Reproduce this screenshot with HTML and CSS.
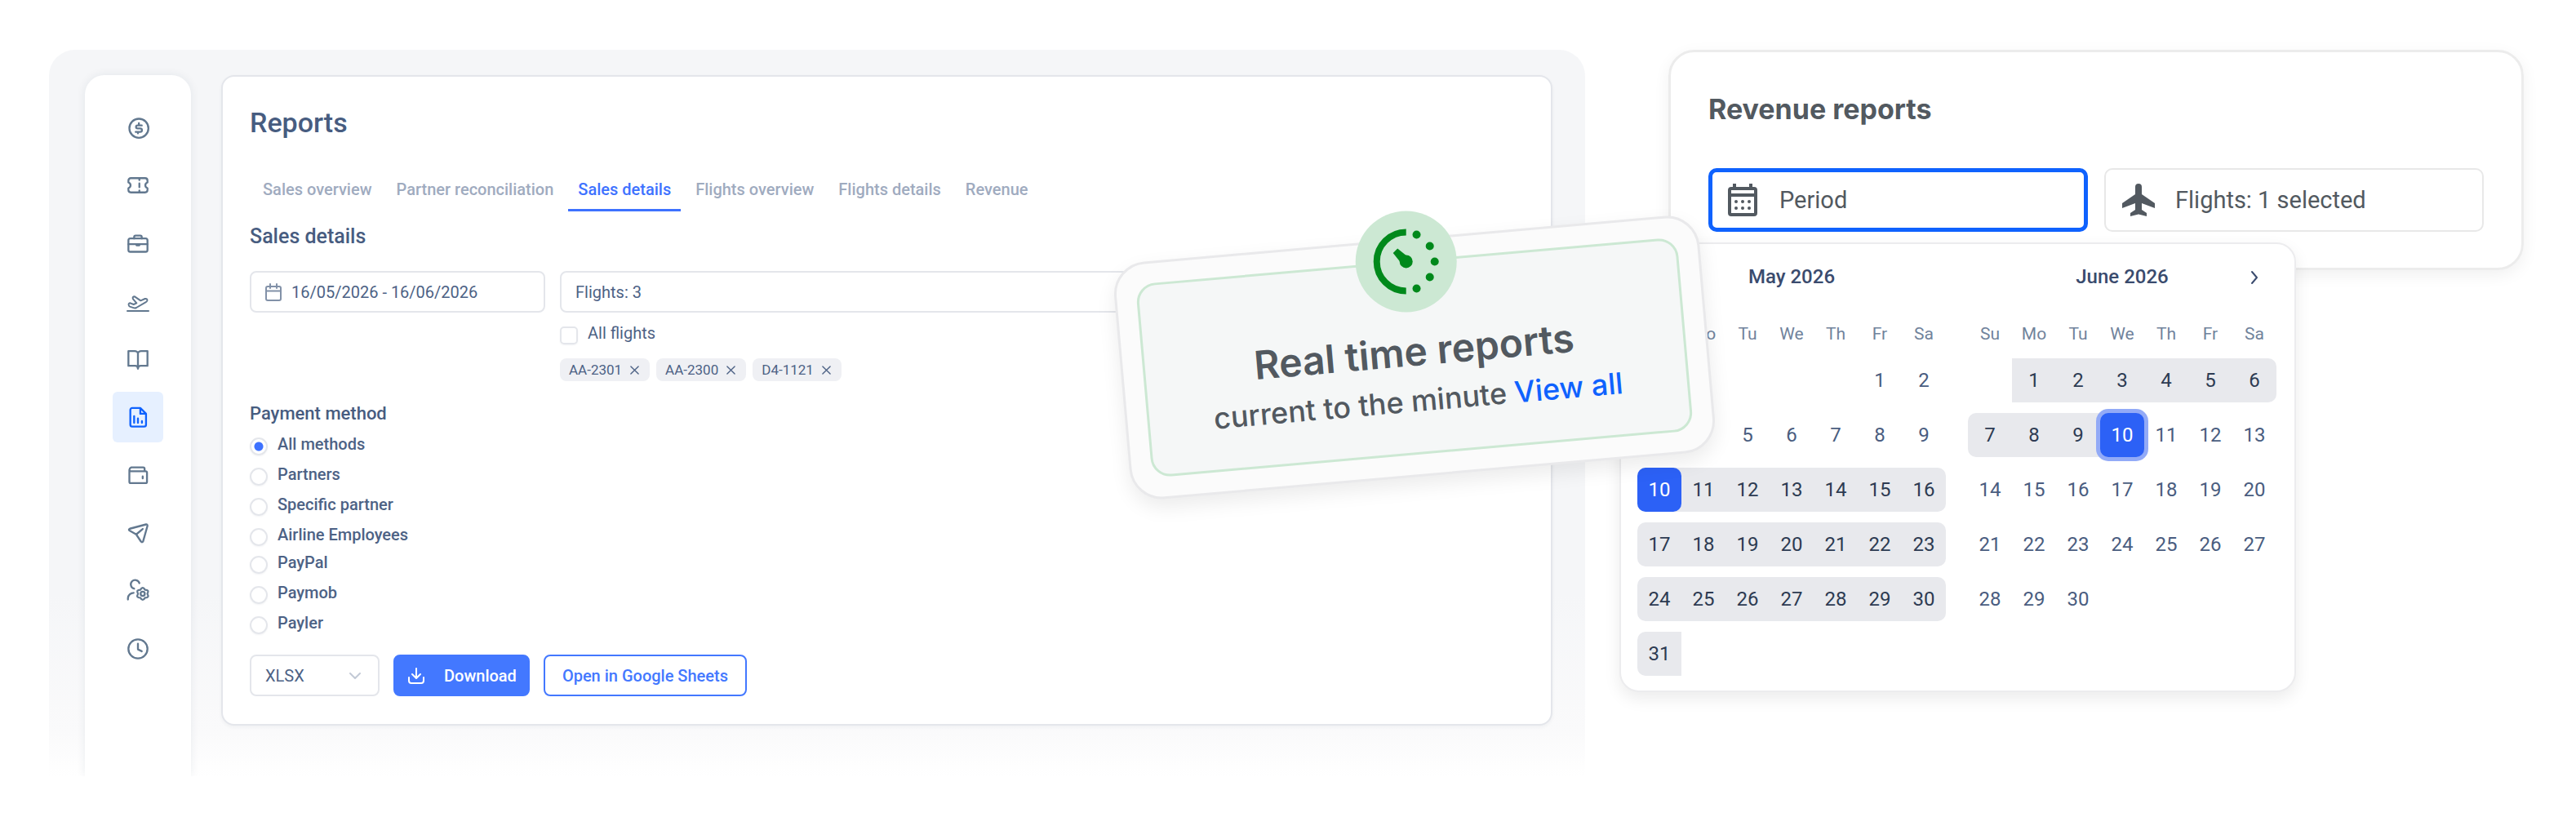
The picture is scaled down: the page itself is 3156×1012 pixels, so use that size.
FILE: index.html
```html
<!DOCTYPE html>
<html lang="en">
<head>
  <meta charset="UTF-8" />
  <meta name="viewport" content="width=device-width, initial-scale=1" />
  <title>Reports</title>
  <link rel="stylesheet" href="styles.css">
</head>
<body>
  <div class="page">
    <section class="stage">
      <nav class="rail" aria-label="Main">
        <a href="#" aria-label="Finance"><svg viewBox="0 0 24 24"><g transform="translate(1 1)"><circle cx="12" cy="12" r="10"/><path d="M15 9h-4.4a1.6 1.6 0 0 0 0 3.2h2.8a1.8 1.8 0 0 1 0 3.6H8.6M12 6.6V9M11 15.8v1.4"/></g></svg></a>
        <a href="#" aria-label="Tickets"><svg viewBox="0 0 24 24"><path d="M2 9V7a2.500 2.500 0 0 1 2.500-2.500h15A2.500 2.500 0 0 1 22 7v2c-3 1.200-3 4.800 0 6v2a2.500 2.500 0 0 1-2.500 2.500h-15A2.500 2.500 0 0 1 2 17v-2c3-1.200 3-4.800 0-6zM13.500 5v1.500M13.500 10v4M13.500 17.500V19"/></svg></a>
        <a href="#" aria-label="Business"><svg viewBox="0 0 24 24"><rect x="2" y="7" width="20" height="14" rx="2"/><path d="M8 7V5.500A1.500 1.500 0 0 1 9.500 4h5A1.500 1.500 0 0 1 16 5.500V7M2 13h20M10.500 14.200h3"/></svg></a>
        <a href="#" aria-label="Flights"><svg viewBox="0 -14 84 84"><g stroke-width="6"><path d="M8 42Q7 35 14 35L26 40 37 35 24 20Q20 11 30 11L52 26 68 19Q78 18 76 26 74 30 70 32L36 52Q32 54 28 53L12 48Q9 47 8 42zM3 64h78"/></g></svg></a>
        <a href="#" aria-label="Catalogue"><svg viewBox="0 0 24 24"><path d="M12 6.500C12 5 10.500 3.500 8.500 3.500H2v15.500h7c2 0 3 1 3 3 0-2 1-3 3-3h7V3.500h-6.500C13.500 3.500 12 5 12 6.500zM12 6.500V22"/></svg></a>
        <a href="#" class="active" aria-label="Reports"><svg viewBox="0 0 24 24"><path d="M14.500 2.500H6A2 2 0 0 0 4 4.500v15.500a2 2 0 0 0 2 2h12.500a2 2 0 0 0 2-2V8.500zM14.500 2.500v6h6M8 11v7M12 13.500V18M16.200 16.200V18"/></svg></a>
        <a href="#" aria-label="Wallet"><svg viewBox="0 0 24 24"><path d="M3 6.500V19a1.500 1.500 0 0 0 1.500 1.500h15.500a1.500 1.500 0 0 0 1.500-1.500V9.500A1.500 1.500 0 0 0 20 8H4.500A1.500 1.500 0 0 1 3 6.500 3 3 0 0 1 5 4h12.500A1.500 1.500 0 0 1 19 5.500V8M17 13.500v2"/></svg></a>
        <a href="#" aria-label="Send"><svg viewBox="0 0 24 24"><path d="M20.500 3L3.500 7.500q-2 1 0 2.200l6.700 3.800 5 7.500q1.400 1.500 2.300-.5L22 4.500Q22 2.700 20.500 3zM10.200 13.500L17 7.800"/></svg></a>
        <a href="#" aria-label="Users"><svg viewBox="0 0 24 24"><path d="M13.500 3.800A4.600 4.600 0 1 0 8 9.600M1.500 21v-1.500A6 6 0 0 1 7.500 14"/><circle cx="17" cy="15" r="2.200"/><path d="M21.900 15Q24.400 10.750 19.450 10.760 17 6.500 14.550 10.760 9.640 10.750 12.100 15 9.640 19.250 14.550 19.240 17 23.500 19.450 19.240 24.400 19.250 21.900 15z"/></svg></a>
        <a href="#" aria-label="History"><svg viewBox="0 0 24 24"><circle cx="12" cy="12" r="10"/><path d="M12 6.500V12.500l4 2"/></svg></a>
      </nav>

      <main class="panel">
        <h1>Reports</h1>
        <div class="tabs">
          <a href="#">Sales overview</a>
          <a href="#">Partner reconciliation</a>
          <a href="#" class="active">Sales details</a>
          <a href="#">Flights overview</a>
          <a href="#">Flights details</a>
          <a href="#">Revenue</a>
        </div>
        <h2>Sales details</h2>
        <div class="filters">
          <label class="field">
            <svg viewBox="0 0 20 22"><path d="M3 4h14a2 2 0 0 1 2 2v13a2 2 0 0 1-2 2H3a2 2 0 0 1-2-2V6a2 2 0 0 1 2-2zM1 9.500h18M6 1v5M14 1v5"/></svg>
            <input type="text" value="16/05/2026 - 16/06/2026" aria-label="Period" />
          </label>
          <div>
            <div class="field"><input type="text" value="Flights: 3" aria-label="Flights" /></div>
            <label class="check light"><input type="checkbox" /><span>All flights</span></label>
            <div class="tags">
              <span class="tag">AA-2301<button aria-label="Remove AA-2301"><svg viewBox="0 0 12 12"><path d="M1 1l10 10M11 1L1 11"/></svg></button></span>
              <span class="tag">AA-2300<button aria-label="Remove AA-2300"><svg viewBox="0 0 12 12"><path d="M1 1l10 10M11 1L1 11"/></svg></button></span>
              <span class="tag">D4-1121<button aria-label="Remove D4-1121"><svg viewBox="0 0 12 12"><path d="M1 1l10 10M11 1L1 11"/></svg></button></span>
            </div>
          </div>
        </div>

        <h3>Payment method</h3>
        <div class="methods">
          <label class="check"><input type="radio" name="method" checked /><span>All methods</span></label>
          <label class="check"><input type="radio" name="method" /><span>Partners</span></label>
          <label class="check"><input type="radio" name="method" /><span>Specific partner</span></label>
          <label class="check"><input type="radio" name="method" /><span>Airline Employees</span></label>
        </div>
        <div class="methods">
          <label class="check"><input type="radio" name="method" /><span>PayPal</span></label>
          <label class="check"><input type="radio" name="method" /><span>Paymob</span></label>
          <label class="check"><input type="radio" name="method" /><span>Payler</span></label>
        </div>

        <div class="actions">
          <label class="select">
            <select aria-label="File format"><option>XLSX</option><option>CSV</option></select>
            <svg viewBox="0 0 14 8"><path d="M1 1l6 6 6-6"/></svg>
          </label>
          <button class="btn primary"><svg viewBox="0 0 20 20"><path d="M10 1v11M5 8l5 5 5-5M1 12v4a3 3 0 0 0 3 3h12a3 3 0 0 0 3-3v-4"/></svg>Download</button>
          <button class="btn">Open in Google Sheets</button>
        </div>
      </main>

      <aside class="realtime">
        <div class="realtime-inner">
          <div class="realtime-icon">
            <svg viewBox="0 0 84 84"><path d="M42 6a36 36 0 0 0 0 72" fill="none" stroke="#00891b" stroke-width="8"/><g fill="#00891b"><circle cx="54.800" cy="9" r="5"/><circle cx="71" cy="23" r="5"/><circle cx="77" cy="42" r="5"/><circle cx="71" cy="61" r="5"/><circle cx="54.800" cy="75" r="5"/><circle cx="42" cy="42" r="8"/><path d="M26 31.500l5.500-5.500L44 36l-8 8z"/></g></svg>
          </div>
          <h2>Real time reports</h2>
          <p>current to the minute <a href="#">View all</a></p>
        </div>
      </aside>
    </section>

    <section class="revenue">
      <h2>Revenue reports</h2>
      <div class="pickers">
        <button class="picker focused"><svg viewBox="0 0 36 40"><path fill-rule="evenodd" d="M6 0h4v4h16V0h4v4h2a4 4 0 0 1 4 4v28a4 4 0 0 1-4 4H4a4 4 0 0 1-4-4V8a4 4 0 0 1 4-4h2zM4 8v4h28V8zM4 16v20h28V16z"/><g><circle cx="10" cy="22" r="2"/><circle cx="18" cy="22" r="2"/><circle cx="26" cy="22" r="2"/><circle cx="10" cy="30" r="2"/><circle cx="18" cy="30" r="2"/><circle cx="26" cy="30" r="2"/></g></svg>Period</button>
        <button class="picker"><svg viewBox="0 0 40 40"><path d="M20 0a4 4 0 0 1 4 4v9l16 11v6l-16-6v8l6 4v4l-10-2.500L10 40v-4l6-4v-8L0 30v-6l16-11V4a4 4 0 0 1 4-4z"/></svg>Flights: 1 selected</button>
      </div>

      <div class="datepicker">
        <table class="month">
          <caption>May 2026</caption>
          <thead><tr><th>Su</th><th>Mo</th><th>Tu</th><th>We</th><th>Th</th><th>Fr</th><th>Sa</th></tr></thead>
          <tbody>
            <tr><td></td><td></td><td></td><td></td><td></td><td>1</td><td>2</td></tr>
            <tr><td>3</td><td>4</td><td>5</td><td>6</td><td>7</td><td>8</td><td>9</td></tr>
            <tr class="range"><td class="picked"><span>10</span></td><td>11</td><td>12</td><td>13</td><td>14</td><td>15</td><td>16</td></tr>
            <tr class="range"><td>17</td><td>18</td><td>19</td><td>20</td><td>21</td><td>22</td><td>23</td></tr>
            <tr class="range"><td>24</td><td>25</td><td>26</td><td>27</td><td>28</td><td>29</td><td>30</td></tr>
            <tr class="range"><td>31</td><td class="off"></td><td class="off"></td><td class="off"></td><td class="off"></td><td class="off"></td><td class="off"></td></tr>
          </tbody>
        </table>
        <table class="month">
          <caption>June 2026</caption>
          <thead><tr><th>Su</th><th>Mo</th><th>Tu</th><th>We</th><th>Th</th><th>Fr</th><th>Sa</th></tr></thead>
          <tbody>
            <tr class="range"><td class="off"></td><td>1</td><td>2</td><td>3</td><td>4</td><td>5</td><td>6</td></tr>
            <tr class="range"><td>7</td><td>8</td><td>9</td><td class="picked end"><span>10</span></td><td class="off">11</td><td class="off">12</td><td class="off">13</td></tr>
            <tr><td>14</td><td>15</td><td>16</td><td>17</td><td>18</td><td>19</td><td>20</td></tr>
            <tr><td>21</td><td>22</td><td>23</td><td>24</td><td>25</td><td>26</td><td>27</td></tr>
            <tr><td>28</td><td>29</td><td>30</td><td></td><td></td><td></td><td></td></tr>
          </tbody>
        </table>
        <button class="next" aria-label="Next month"><svg viewBox="0 0 10 18"><path d="M2 2l6 7-6 7"/></svg></button>
      </div>
    </section>
  </div>
</body>
</html>
```
FILE: styles.css
```css
* {
  box-sizing: border-box;
}
body {
  margin: 0;
  background: #fff;
  color: #4d6285;
  font-family: Roboto, sans-serif;
  font-size: 20px;
  line-height: 24px;
}
h1, h2, h3, p {
  margin: 0;
}
h1, h2, h3 {
  font-weight: 500;
}
a {
  text-decoration: none;
}
button, input, select {
  font: inherit;
  color: inherit;
  background: none;
  border: none;
  margin: 0;
  padding: 0;
}
button {
  cursor: pointer;
}
svg {
  display: block;
  flex: none;
  fill: none;
  stroke: currentColor;
  stroke-width: 2;
  stroke-linecap: round;
  stroke-linejoin: round;
}
.page {
  display: grid;
  grid-template-columns: 1882fr 1048fr;
  gap: 102px;
  align-items: start;
  padding: 61px 64px 0 60px;
}

/* app window */
.stage {
  position: relative;
  z-index: 1;
  display: flex;
  gap: 37px;
  padding: 31px 40px 0 44px;
  border-radius: 32px 32px 0 0;
  background: linear-gradient(#f5f6f8 75%, #fafafb 94%, #fff);
}
.rail {
  flex: none;
  width: 130px;
  padding-top: 33px;
  display: flex;
  flex-direction: column;
  align-items: center;
  gap: 9px;
  background: #fff;
  border-radius: 24px 24px 0 0;
  box-shadow: 0 0 12px rgba(30, 50, 80, 0.08);
}
.rail a {
  width: 62px;
  height: 62px;
  display: grid;
  place-items: center;
  border-radius: 6px;
  color: #62788f;
}
.rail svg {
  width: 28px;
  height: 28px;
  overflow: visible;
}
.rail a.active {
  background: #e6f0ff;
  color: #0f62fe;
}
.panel {
  flex: 1;
  min-width: 0;
  margin-bottom: 62px;
  padding: 36px 33px 34px;
  background: #fff;
  border: 2px solid #e4e6eb;
  border-radius: 16px;
  box-shadow: 0 2px 4px rgba(30, 50, 80, 0.05);
}
.panel h1 {
  font-size: 34px;
  line-height: 40px;
  color: #475c80;
}
.panel h2 {
  margin-top: 16px;
  font-size: 25px;
  line-height: 30px;
  color: #475c80;
}
.panel h3 {
  margin: 26px 0 11px;
  font-size: 22px;
  line-height: 28px;
  color: #475c80;
}
.tabs {
  display: flex;
  gap: 6px;
  margin-top: 50px;
  padding-left: 4px;
  font-weight: 500;
}
.tabs a {
  padding: 0 12px 12px;
  border-bottom: 3px solid transparent;
  color: #9fabbf;
}
.tabs a.active {
  color: #3e72ff;
  border-color: #3e72ff;
}
.filters {
  display: grid;
  grid-template-columns: 362px 1fr;
  gap: 18px;
  margin-top: 27px;
}
.field {
  display: flex;
  align-items: center;
  gap: 12px;
  height: 51px;
  padding: 0 18px 0 17px;
  border: 2px solid #e4e6eb;
  border-radius: 8px;
}
.field svg {
  width: 20px;
  height: 22px;
  color: #8291a8;
}
.field input {
  flex: 1;
  min-width: 0;
}
.check {
  display: flex;
  gap: 12px;
  height: 26px;
  font-weight: 500;
}
.check input {
  appearance: none;
  flex: none;
  width: 22px;
  height: 22px;
  margin-top: 4px;
  border: 2px solid #e4e6eb;
  border-radius: 5px;
  box-shadow: 0 1px 2px rgba(30, 50, 80, 0.06);
}
.check input[type="radio"] {
  border-radius: 50%;
}
.check input:checked {
  background: radial-gradient(circle, #3e72ff 5px, #fff 6px);
}
.check.light {
  margin-top: 13px;
  font-weight: 400;
}
.tags {
  display: flex;
  gap: 8px;
  margin-top: 17px;
}
.tag {
  display: flex;
  align-items: center;
  gap: 10px;
  height: 28px;
  padding: 0 13px 0 11px;
  border-radius: 8px;
  background: #eff0f4;
  font-size: 17px;
}
.tag svg {
  width: 11px;
  height: 11px;
  stroke-width: 1.500;
}
.methods {
  display: grid;
  gap: 11px;
}
.methods + .methods {
  margin-top: 8px;
}
.actions {
  display: flex;
  gap: 17px;
  margin-top: 25px;
}
.select {
  display: flex;
  align-items: center;
  width: 159px;
  height: 51px;
  padding: 0 21px 0 17px;
  border: 2px solid #e4e6eb;
  border-radius: 8px;
}
.select select {
  appearance: none;
  flex: 1;
}
.select svg {
  width: 14px;
  height: 8px;
  color: #c3cad6;
}
.btn {
  display: flex;
  align-items: center;
  gap: 24px;
  height: 51px;
  padding: 0 21px;
  border: 2px solid #4378ff;
  border-radius: 8px;
  color: #4378ff;
  font-weight: 500;
}
.btn.primary {
  padding: 0 14px 0 16px;
  background: #4378ff;
  color: #fff;
}
.btn svg {
  width: 20px;
  height: 20px;
}

/* tilted callout lying over both columns */
.realtime {
  position: absolute;
  top: 231px;
  right: -151px;
  width: 720px;
  padding: 24px;
  transform: rotate(-5deg);
  background: #fbfbfb;
  border: 3px solid #e9e9eb;
  border-radius: 40px;
  box-shadow: 0 10px 24px rgba(0, 0, 0, 0.08);
  font-family: Inter, sans-serif;
  color: #525960;
  text-align: center;
}
.realtime-inner {
  position: relative;
  height: 238px;
  padding-top: 80px;
  background: #f5f7f7;
  border: 3px solid #cce8d3;
  border-radius: 24px;
}
.realtime-icon {
  position: absolute;
  top: -64px;
  left: 50%;
  width: 124px;
  height: 124px;
  display: grid;
  place-items: center;
  transform: translateX(-50%) rotate(5deg);
  border-radius: 50%;
  background: #cce8d3;
}
.realtime-icon svg {
  width: 84px;
  height: 84px;
  stroke-linecap: butt;
}
.realtime-icon g {
  stroke: none;
}
.realtime h2 {
  font-size: 48px;
  line-height: 58px;
  font-weight: 600;
}
.realtime p {
  margin-top: 9px;
  font-size: 36px;
  line-height: 44px;
  font-weight: 500;
}
.realtime a {
  color: #0f62fe;
}

/* revenue card with calendar */
.revenue {
  position: relative;
  padding: 49px 46px 44px;
  border: 3px solid #ececec;
  border-radius: 32px;
  box-shadow: 0 6px 20px rgba(0, 0, 0, 0.06);
  color: #525960;
}
.revenue h2 {
  font-family: Inter, sans-serif;
  font-size: 34px;
  line-height: 42px;
  font-weight: 700;
}
.pickers {
  display: grid;
  grid-template-columns: 1fr 1fr;
  gap: 20px;
  margin-top: 51px;
}
.picker {
  display: flex;
  align-items: center;
  gap: 25px;
  height: 78px;
  padding: 0 20px;
  border: 2px solid #e8e8e8;
  border-radius: 10px;
  font-size: 29px;
}
.picker.focused {
  padding: 0 17px;
  border: 5px solid #0f62fe;
}
.picker svg {
  width: 40px;
  height: 40px;
  fill: currentColor;
  stroke: none;
}
.datepicker {
  position: absolute;
  top: 233px;
  left: -63px;
  display: flex;
  align-items: flex-start;
  gap: 27px;
  padding: 22px 22px 5px 20px;
  background: #fff;
  border: 2px solid #ececee;
  border-radius: 24px;
  box-shadow: 0 8px 20px rgba(0, 0, 0, 0.08);
}
.month {
  table-layout: fixed;
  width: 378px;
  border-spacing: 0 13px;
  font-size: 24px;
  text-align: center;
  color: #4a5d80;
}
.month caption {
  line-height: 36px;
  font-weight: 500;
  color: #3a4b6e;
}
.month th {
  height: 34px;
  padding: 0;
  font-size: 21px;
  font-weight: 400;
  color: #71839c;
}
.month thead::before {
  content: "";
  display: block;
  height: 9px;
}
.month td {
  height: 54px;
  padding: 0;
}
.month .range td:not(.off) {
  background: #e8e9ed;
  color: #2d3b52;
}
.month .range td:first-child {
  border-radius: 10px 0 0 10px;
}
.month .range td:last-child {
  border-radius: 0 10px 10px 0;
}
.month .picked span {
  display: block;
  line-height: 54px;
  border-radius: 10px;
  background: #2c61f6;
  color: #fff;
}
.month .range .picked.end {
  background: linear-gradient(90deg, #e8e9ed 50%, transparent 50%);
}
.month .end span {
  box-shadow: 0 0 0 5px #92aaf7;
}
.next {
  position: absolute;
  top: 32px;
  right: 44px;
}
.next svg {
  width: 10px;
  height: 18px;
  color: #3a4b6e;
}
```
